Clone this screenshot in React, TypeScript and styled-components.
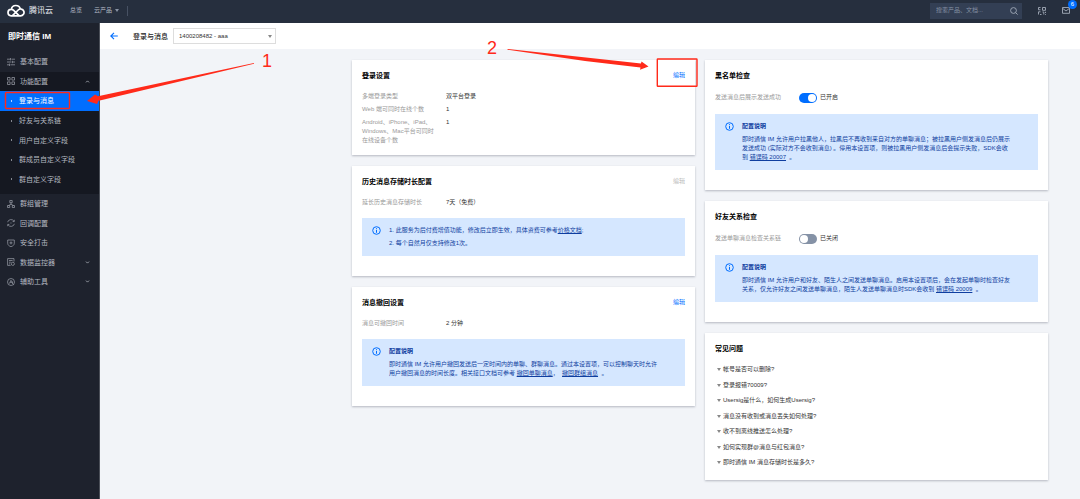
import React from 'react';
import styled, { createGlobalStyle } from 'styled-components';

const GlobalStyle = createGlobalStyle`
  * { box-sizing: border-box; }
  html, body, #root { min-height: 100vh; }
  body {
    margin: 0;
    background: #f2f4f8;
    color: #333;
    font: 6px/9px "Liberation Sans", "Noto Sans CJK SC", sans-serif;
  }
  button, input, select { font: inherit; color: inherit; margin: 0; }
  ul, dl, dd, h1, h2, h3, p { margin: 0; padding: 0; }
  ul { list-style: none; }
`;

const Page = styled.div`
  position: relative;
  display: flex;
  flex-direction: column;
  min-height: 100vh;
`;

const TopBar = styled.header`
  display: flex;
  align-items: center;
  height: 23px;
  padding: 0 10px 2px 7px;
  background: #262f3e;
  color: #b3bac6;
`;

const Brand = styled.a`
  display: flex;
  align-items: center;
  gap: 4px;
  margin-right: 17px;
  color: #e6eaf0;
  font-size: 8px;
  line-height: 10px;
  text-decoration: none;
`;

const TopLink = styled.a`
  display: flex;
  align-items: center;
  gap: 3px;
  margin-right: 12px;
  color: inherit;
  text-decoration: none;
`;

const Divider = styled.span`
  width: 1px;
  height: 10px;
  margin-left: -4px;
  background: #475163;
`;

const SearchBox = styled.label`
  display: flex;
  align-items: center;
  width: 92px;
  height: 16px;
  margin-left: auto;
  padding: 0 4px 0 6px;
  background: #333f54;
`;

const SearchInput = styled.input`
  flex: 1;
  min-width: 0;
  padding: 0;
  border: 0;
  outline: 0;
  background: transparent;
  &::placeholder { color: #8590a3; opacity: 1; }
`;

const IconButton = styled.button`
  position: relative;
  display: flex;
  margin-left: 16px;
  padding: 0;
  border: 0;
  background: none;
`;

const Badge = styled.span`
  position: absolute;
  top: -7px;
  right: -7px;
  width: 9px;
  height: 9px;
  border-radius: 5px;
  background: #006eff;
  color: #fff;
  text-align: center;
`;

const Body = styled.div`
  display: flex;
  flex: 1;
`;

const Sidebar = styled.nav`
  flex: 0 0 100px;
  border-right: 1px solid #4b4f58;
  background: #1e222d;
  color: #b4b8c0;
  font-size: 7px;
`;

const Product = styled.h1`
  padding: 9px 8px 10px;
  color: #fff;
  font-size: 8px;
  line-height: 10px;
`;

const Menu = styled.ul`
  display: flex;
  flex-direction: column;
  justify-content: space-between;
  min-height: 239px;
`;

const MenuGroup = styled.li<{ $open?: boolean }>`
  background: ${p => (p.$open ? '#151821' : 'transparent')};
`;

const MenuItem = styled.a`
  display: flex;
  align-items: center;
  gap: 5px;
  height: 19px;
  padding: 0 9px 0 7px;
  color: inherit;
  text-decoration: none;
  > svg:nth-of-type(2) { margin-left: auto; }
`;

const SubMenu = styled.ul`
  display: flex;
  flex-direction: column;
  justify-content: space-between;
  min-height: 103px;
  padding-bottom: 5px;
`;

const SubItem = styled.a<{ $active?: boolean }>`
  display: flex;
  align-items: center;
  gap: 7px;
  height: ${p => (p.$active ? 20 : 19)}px;
  padding-left: 11px;
  background: ${p => (p.$active ? '#006eff' : 'transparent')};
  color: ${p => (p.$active ? '#fff' : 'inherit')};
  text-decoration: none;
  &::before {
    content: '';
    width: 1px;
    height: 2px;
    background: currentColor;
    opacity: 0.7;
  }
`;

const Main = styled.main`
  flex: 1;
  min-width: 0;
`;

const PageHeader = styled.div`
  display: flex;
  align-items: center;
  height: 26px;
  padding: 0 10px;
  background: #fff;
`;

const BackLink = styled.a`
  display: flex;
  margin-right: 15px;
`;

const PageTitle = styled.h2`
  margin-right: 5px;
  color: #222;
  font-size: 7px;
  font-weight: 500;
`;

const SelectWrap = styled.div`
  position: relative;
  display: flex;
  align-items: center;
  svg { position: absolute; right: 4px; pointer-events: none; }
`;

const AppSelect = styled.select`
  width: 103px;
  height: 16px;
  padding: 0 5px;
  border: 1px solid #ddd;
  border-radius: 0;
  background: #fff;
  appearance: none;
`;

const Columns = styled.div`
  display: grid;
  grid-template-columns: 1fr 1fr;
  gap: 10px;
  align-items: start;
  max-width: 728px;
  margin-left: auto;
  padding: 11px 32px 16px 0;
`;

const Column = styled.div`
  display: grid;
  gap: 11px;
`;

const CardBox = styled.section`
  padding: 10px;
  background: #fff;
  box-shadow: 0 1px 2px rgba(54, 58, 80, 0.32);
`;

const CardHead = styled.div`
  display: flex;
  align-items: center;
  justify-content: space-between;
  height: 10px;
  margin-bottom: 12px;
`;

const CardTitle = styled.h3`
  color: #000;
  font-size: 7px;
`;

const EditButton = styled.button`
  padding: 0;
  border: 0;
  background: none;
  color: #006eff;
  line-height: 9px;
  &:disabled { color: #bbb; }
`;

const Fields = styled.dl`
  display: grid;
  grid-template-columns: 74px 1fr;
  gap: 4px 10px;
  dt { color: #999; }
`;

const SwitchRow = styled.label`
  display: grid;
  grid-template-columns: 74px auto 1fr;
  align-items: center;
  height: 11px;
`;

const SwitchLabel = styled.span`
  color: #999;
  white-space: nowrap;
`;

const Switch = styled.input`
  appearance: none;
  display: flex;
  width: 18px;
  height: 10px;
  margin: 0 3px 0 10px;
  padding: 1px;
  border-radius: 5px;
  background: #8592a6;
  &::before {
    content: '';
    width: 8px;
    height: 8px;
    border-radius: 4px;
    background: #fff;
  }
  &:checked { background: #006eff; }
  &:checked::before { margin-left: auto; }
`;

const AlertBox = styled.div`
  display: flex;
  gap: 8px;
  margin: 11px 0 10px;
  padding: 8px 10px;
  background: #d5e7ff;
  color: #0f3ea0;
  svg { flex: none; }
`;

const AlertText = styled.div`
  display: grid;
  gap: 4px;
  a { color: inherit; }
`;

const FaqList = styled.ul`
  display: flex;
  flex-direction: column;
  justify-content: space-between;
  min-height: 102px;
  padding-left: 2px;
  margin-bottom: 3px;
`;

const FaqButton = styled.button`
  display: flex;
  align-items: center;
  gap: 2px;
  padding: 0;
  border: 0;
  background: none;
  line-height: 9px;
`;

const Annotations = styled.svg`
  position: absolute;
  top: 0;
  left: 0;
  overflow: visible;
  pointer-events: none;
`;

const Caret = ({ color = '#888' }: { color?: string }) => (
  <svg width="4" height="3" viewBox="0 0 4 3"><path d="M0 0h4L2 3z" fill={color} /></svg>
);

const Chevron = ({ up }: { up?: boolean }) => (
  <svg width="5" height="5" viewBox="0 0 5 5" fill="none" stroke="#a5a9b2" strokeWidth="0.9">
    <path d={up ? 'M1 3.4l1.5-1.5L4 3.4' : 'M1 1.6l1.5 1.5L4 1.6'} />
  </svg>
);

const InfoIcon = () => (
  <svg width="9" height="9" viewBox="0 0 9 9" fill="none" stroke="#006eff">
    <circle cx="4.5" cy="4.5" r="3.8" />
    <path d="M4.5 4v2.8M4.5 2.2v1" />
  </svg>
);

const iconPaths: Record<string, React.ReactNode> = {
  sliders: <path d="M0 1.2h3M4.5 1.2H8M0 4h4.500M6 4h2M0 6.8h2M3.5 6.8H8M3.5 0v2.4M5.5 2.8v2.4M2.5 5.6V8" />,
  grid: <path d="M.5.5h2.6v2.6H.5zM4.9.5h2.6v2.6H4.9zM.5 4.9h2.6v2.6H.5zM4.9 4.9h2.6v2.6H4.9z" />,
  group: <path d="M2.8.5h2.4v2.2H2.8zM.5 5.5h2.2v2H.5zM5.3 5.5h2.2v2H5.3zM4 2.7v1.5L1.6 5.5M4 4.2l2.4 1.3" />,
  callback: (
    <>
      <path d="M.6 3.2A3.5 3.5 0 0 1 7 2.3M7.4 4.8A3.5 3.5 0 0 1 1 5.7M7.3.8v1.8H5.6M.7 7.2V5.4h1.7" />
      <path d="M3 4h.6M4.5 4h.6" />
    </>
  ),
  shield: <path d="M.7 1h6.6v3.2C7.3 6 6 7 4 7.7 2 7 .7 6 .7 4.2zM4 2.4v3M2.5 3.9h3" />,
  monitor: (
    <>
      <path d="M7 3.5V.6H.6v6.8h3M2 2.5h3.6M2 4.2h1.8M2 5.9h1" />
      <circle cx="5.8" cy="5.8" r="1.6" />
    </>
  ),
  tools: (
    <>
      <circle cx="4" cy="4" r="3.5" />
      <path d="M2.3 5.6L4 2.3l1 1.8M3.3 4.5h1.5M4.8 4.8l1.8 1.8M5.5 3.5V5" />
    </>
  ),
};

const MenuIcon = ({ name }: { name: string }) => (
  <svg width="8" height="8" viewBox="0 0 8 8" fill="none" stroke="#9da2ac" strokeWidth="0.7">
    {iconPaths[name]}
  </svg>
);

const Card = ({ title, action, children }: { title: string; action?: React.ReactNode; children: React.ReactNode }) => (
  <CardBox>
    <CardHead><CardTitle>{title}</CardTitle>{action}</CardHead>
    {children}
  </CardBox>
);

const Alert = ({ children }: { children: React.ReactNode }) => (
  <AlertBox><InfoIcon /><AlertText>{children}</AlertText></AlertBox>
);

const subItems = ['登录与消息', '好友与关系链', '用户自定义字段', '群成员自定义字段', '群自定义字段'];

const menu = [
  { icon: 'sliders', text: '基本配置' },
  { icon: 'grid', text: '功能配置', open: true },
  { icon: 'group', text: '群组管理' },
  { icon: 'callback', text: '回调配置' },
  { icon: 'shield', text: '安全打击' },
  { icon: 'monitor', text: '数据监控器', more: true },
  { icon: 'tools', text: '辅助工具', more: true },
];

const faqs = [
  '帐号是否可以删除?',
  '登录报错70009?',
  'Usersig是什么，如何生成Usersig?',
  '消息没有收到或消息丢失如何处理?',
  '收不到离线推送怎么处理?',
  '如何实现群@消息与红包消息?',
  '即时通信 IM 消息存储时长是多久?',
];

export default function App() {
  return (
    <Page>
      <GlobalStyle />
      <TopBar>
        <Brand href="#">
          <svg width="18" height="13" viewBox="0 0 18 13" fill="none" stroke="#fff" strokeWidth="1.7" strokeLinejoin="round" strokeLinecap="round">
            <path d="M4.2 11.8a3.2 3.2 0 0 1 0-6.4c1 0 1.8.3 2.5 1L12 11.6M4.3 5.3a4.6 4.6 0 0 1 9-.3M4.2 11.8h9.4a3.4 3.4 0 1 0-2.4-5.8L5.7 11.4" />
          </svg>
          腾讯云
        </Brand>
        <TopLink href="#">总览</TopLink>
        <TopLink href="#">云产品 <Caret color="#8993a4" /></TopLink>
        <Divider />
        <SearchBox>
          <SearchInput aria-label="搜索" placeholder="搜索产品、文档..." />
          <svg width="8" height="8" viewBox="0 0 8 8" fill="none" stroke="#a4adba" strokeWidth="0.9">
            <circle cx="3.5" cy="3.5" r="2.9" />
            <path d="M5.6 5.6l2 2" />
          </svg>
        </SearchBox>
        <IconButton aria-label="二维码">
          <svg width="8" height="8" viewBox="0 0 8 8" fill="none" stroke="#a4adba" strokeWidth="0.9">
            <path d="M2.5.5h-2v2.3h2M4.500.5h3v2.8h-3zM.5 4.8h2M.5 4.8v2.7M2 7.5h1.5M4.5 5h1.3v2.5M7.5 4.8V6M7 7.5h.8" />
          </svg>
        </IconButton>
        <IconButton aria-label="消息">
          <svg width="8" height="7" viewBox="0 0 8 7" fill="none" stroke="#a4adba" strokeWidth="0.9">
            <path d="M.5.5h7v5.8h-7zM.8 1.5L4 4l3.2-2.5" />
          </svg>
          <Badge>6</Badge>
        </IconButton>
      </TopBar>

      <Body>
        <Sidebar>
          <Product>即时通信 IM</Product>
          <Menu>
            {menu.map(m => (
              <MenuGroup key={m.text} $open={m.open}>
                <MenuItem href="#">
                  <MenuIcon name={m.icon} />
                  {m.text}
                  {(m.open || m.more) && <Chevron up={m.open} />}
                </MenuItem>
                {m.open && (
                  <SubMenu>
                    {subItems.map((s, i) => (
                      <li key={s}><SubItem href="#" $active={i === 0}>{s}</SubItem></li>
                    ))}
                  </SubMenu>
                )}
              </MenuGroup>
            ))}
          </Menu>
        </Sidebar>

        <Main>
          <PageHeader>
            <BackLink href="#" aria-label="返回">
              <svg width="8" height="8" viewBox="0 0 8 8" fill="none" stroke="#006eff" strokeWidth="1.1">
                <path d="M4 .8L.8 4 4 7.2M.8 4h7" />
              </svg>
            </BackLink>
            <PageTitle>登录与消息</PageTitle>
            <SelectWrap>
              <AppSelect aria-label="应用" defaultValue="aaa">
                <option value="aaa">1400208482 - aaa</option>
              </AppSelect>
              <Caret />
            </SelectWrap>
          </PageHeader>

          <Columns>
            <Column>
              <Card title="登录设置" action={<EditButton>编辑</EditButton>}>
                <Fields>
                  <dt>多端登录类型</dt><dd>双平台登录</dd>
                  <dt>Web 端可同时在线个数</dt><dd>1</dd>
                  <dt>Android、iPhone、iPad、<br />Windows、Mac平台可同时<br />在线设备个数</dt><dd>1</dd>
                </Fields>
              </Card>
              <Card title="历史消息存储时长配置" action={<EditButton disabled>编辑</EditButton>}>
                <Fields><dt>延长历史消息存储时长</dt><dd>7天（免费）</dd></Fields>
                <Alert>
                  <p>1. 此服务为后付费增值功能，修改后立即生效，具体资费可参考<a href="#">价格文档</a>;</p>
                  <p>2. 每个自然月仅支持修改1次。</p>
                </Alert>
              </Card>
              <Card title="消息撤回设置" action={<EditButton>编辑</EditButton>}>
                <Fields><dt>消息可撤回时间</dt><dd>2 分钟</dd></Fields>
                <Alert>
                  <strong>配置说明</strong>
                  <p>
                    即时通信 IM 允许用户撤回发送后一定时间内的单聊、群聊消息。通过本设置项，可以控制聊天时允许<br />
                    用户撤回消息的时间长度。相关接口文档可参考 <a href="#">撤回单聊消息</a>，&nbsp; <a href="#">撤回群组消息</a>&nbsp; 。
                  </p>
                </Alert>
              </Card>
            </Column>

            <Column>
              <Card title="黑名单检查">
                <SwitchRow>
                  <SwitchLabel>发送消息后展示发送成功</SwitchLabel>
                  <Switch type="checkbox" role="switch" defaultChecked />
                  已开启
                </SwitchRow>
                <Alert>
                  <strong>配置说明</strong>
                  <p>
                    即时通信 IM 允许用户拉黑他人，拉黑后不再收到来自对方的单聊消息；被拉黑用户侧发消息后仍展示<br />
                    发送成功 (实际对方不会收到消息) 。停用本设置项，则被拉黑用户侧发消息后会提示失败，SDK会收<br />
                    到 <a href="#">错误码 20007</a>&nbsp; 。
                  </p>
                </Alert>
              </Card>
              <Card title="好友关系检查">
                <SwitchRow>
                  <SwitchLabel>发送单聊消息检查关系链</SwitchLabel>
                  <Switch type="checkbox" role="switch" />
                  已关闭
                </SwitchRow>
                <Alert>
                  <strong>配置说明</strong>
                  <p>
                    即时通信 IM 允许用户和好友、陌生人之间发送单聊消息。启用本设置项后，会在发起单聊时检查好友<br />
                    关系，仅允许好友之间发送单聊消息，陌生人发送单聊消息时SDK会收到 <a href="#">错误码 20009</a>&nbsp; 。
                  </p>
                </Alert>
              </Card>
              <Card title="常见问题">
                <FaqList>
                  {faqs.map(q => (
                    <li key={q}><FaqButton><Caret />{q}</FaqButton></li>
                  ))}
                </FaqList>
              </Card>
            </Column>
          </Columns>
        </Main>
      </Body>

      <Annotations width="720" height="120" viewBox="0 0 720 120" fill="none">
        <g stroke="#ff2a1a" strokeWidth="1.4">
          <rect x="5.5" y="92.5" width="64" height="16" rx="1" />
          <rect x="657.3" y="59" width="39.7" height="27.3" rx="0.5" />
        </g>
        <g fill="#ff2a1a">
          <path d="M254 63L98 96.200 95 94.500 87 101l10 3 1.500-3.200L103 99.800 254 63.800z" />
          <path d="M507.500 49L641 63.500 641.500 61.500 648.500 66.500 640 69.800 640.500 67.500 585 61 507.500 49.800z" />
          <text x="262" y="67" fontSize="18">1</text>
          <text x="487" y="54" fontSize="18">2</text>
        </g>
      </Annotations>
    </Page>
  );
}
